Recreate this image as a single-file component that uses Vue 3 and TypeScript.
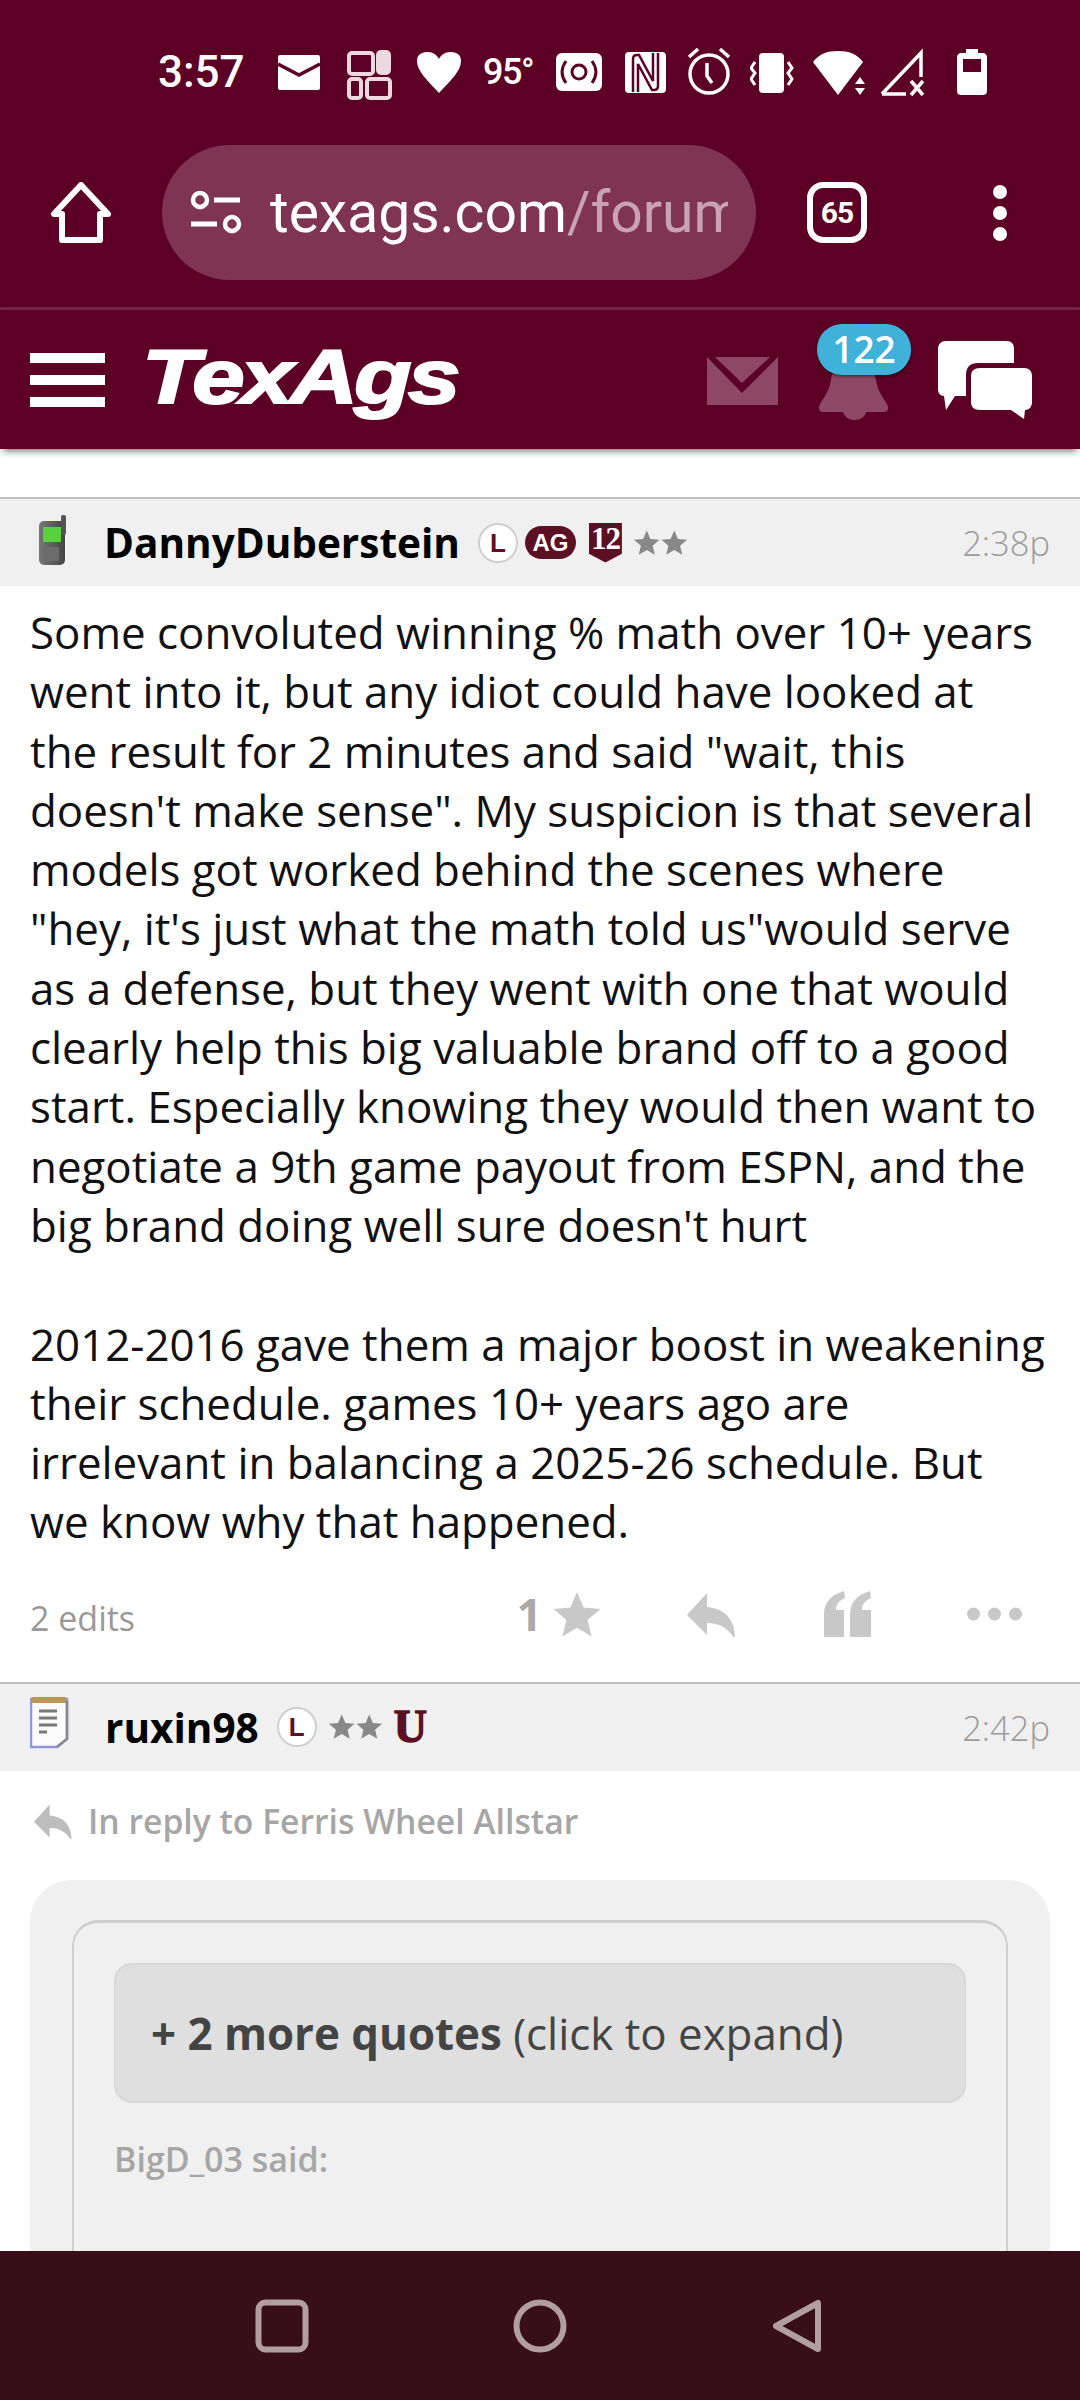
<script setup lang="ts">
const bodyTop: string[] = [
  'Some convoluted winning % math over 10+ years',
  'went into it, but any idiot could have looked at',
  'the result for 2 minutes and said "wait, this',
  'doesn\'t make sense". My suspicion is that several',
  'models got worked behind the scenes where',
  '"hey, it\'s just what the math told us"would serve',
  'as a defense, but they went with one that would',
  'clearly help this big valuable brand off to a good',
  'start. Especially knowing they would then want to',
  'negotiate a 9th game payout from ESPN, and the',
  'big brand doing well sure doesn\'t hurt',
]
const bodyBottom: string[] = [
  '2012-2016 gave them a major boost in weakening',
  'their schedule. games 10+ years ago are',
  'irrelevant in balancing a 2025-26 schedule. But',
  'we know why that happened.',
]
const starPath = 'M12 1l3.2 7.4 8 .7-6.1 5.3 1.9 7.9L12 18.1 5 22.3l1.9-7.9L.8 9.1l8-.7z'
const replyPath = 'M22 2 2 24l20 20V32c12 0 20 4 28 16 0-18-8-30-28-32z'
</script>

<template>
  <div class="phone">
    <div class="chrome">
      <div class="status">
        <span class="clock">3:57</span>
        <svg width="69" height="60" viewBox="0 0 69 60"><rect x="0" y="13" width="42" height="35" rx="2" fill="#fff" /><path d="M0 22 21 33 42 22" fill="none" stroke="#5c0025" stroke-width="3.5" /></svg>
        <svg width="70" height="60" viewBox="0 0 70 60"><g fill="none" stroke="#ecd9e0" stroke-width="4"><rect x="2" y="11" width="24" height="21" rx="3" /><rect x="2" y="37" width="12" height="19" rx="3" /><rect x="20" y="37" width="23" height="19" rx="3" /></g><rect x="29" y="8" width="15" height="25" rx="5" fill="#ecd9e0" /></svg>
        <svg width="66" height="60" viewBox="0 0 66 60"><path d="M22 51C10 38 0 29 0 19 0 12 5 10 11 10c5 0 9 3 11 7 2-4 6-7 11-7 6 0 11 2 11 9 0 10-10 19-22 32z" fill="#fff" /></svg>
        <span class="temp">95°</span>
        <svg width="69" height="60" viewBox="0 0 69 60"><rect x="0" y="11" width="46" height="38" rx="6" fill="#fff" /><g fill="none" stroke="#5c0025" stroke-width="3"><circle cx="23" cy="30" r="7" /><path d="M10 19c-5 7-5 15 0 22M36 19c5 7 5 15 0 22" /></g></svg>
        <svg width="62" height="60" viewBox="0 0 62 60"><rect x="0" y="10" width="41" height="41" rx="4" fill="#fff" /><path d="M8 50V17c0-3 2-4 4-4h2l14 26V11M33 11v33c0 3-2 4-4 4h-2L13 22v28" fill="none" stroke="#5c0025" stroke-width="2.5" /></svg>
        <svg width="63" height="60" viewBox="0 0 63 60"><g fill="none" stroke="#fff" stroke-width="3.5"><circle cx="22" cy="32" r="19" /><path d="M20 21v13l5 7M2 15l9-8M42 15l-9-8" /></g></svg>
        <svg width="63" height="60" viewBox="0 0 63 60"><rect x="9" y="11" width="25" height="40" rx="4" fill="#fff" /><g fill="none" stroke="#fff" stroke-width="3"><path d="M5 20 1 26l4 5-4 6 4 6M38 20l4 6-4 5 4 6-4 6" /></g></svg>
        <svg width="67" height="60" viewBox="0 0 67 60"><path d="M0 20C6 12 14 9 25 9s19 3 25 11L25 53z" fill="#fff" /><path d="M42 42l5-7 5 7zM42 46h10l-5 7z" fill="#fff" /></svg>
        <svg width="77" height="60" viewBox="0 0 77 60"><path d="M2 52 41 11v24" fill="none" stroke="#fff" stroke-width="3.5" /><path d="M2 52h24" fill="none" stroke="#fff" stroke-width="3.5" /><path d="M31 39l12 14M43 39 31 53" fill="none" stroke="#fff" stroke-width="3.5" /></svg>
        <svg width="30" height="60" viewBox="0 0 30 60"><path d="M9 7h12v4h5c2 0 4 2 4 4v34c0 3-2 4-4 4H4c-2 0-4-1-4-4V15c0-2 2-4 4-4h5z" fill="#fff" /><rect x="6" y="17" width="18" height="13" fill="#5c0025" /></svg>
      </div>
      <div class="toolbar">
        <svg class="home" width="62" height="62" viewBox="0 0 62 62"><path d="M31 3 4 32h8v26h38V32h8z" fill="none" stroke="#fff" stroke-width="6" stroke-linejoin="round" /></svg>
        <div class="pill">
          <svg class="tune" width="52" height="44" viewBox="0 0 52 44"><g fill="none" stroke="#fff" stroke-width="4.5"><circle cx="10" cy="9" r="7" /><circle cx="42" cy="33" r="7" /></g><path d="M24 9h26M1 33h26" stroke="#fff" stroke-width="5" /></svg>
          <div class="url"><span class="host">texags.com</span><span class="path">/forums</span></div>
        </div>
        <div class="tabs">65</div>
        <div class="dots"><i></i><i></i><i></i></div>
      </div>
    </div>

    <header class="site">
      <div class="burger"><i></i><i></i><i></i></div>
      <span class="logo">TexAgs</span>
      <div class="site-right">
        <svg class="env" width="71" height="48" viewBox="0 0 71 48"><path d="M0 0 35 36 71 0v48H0z" fill="#8d4964" /><path d="M8 0h55L35 26z" fill="#8d4964" /></svg>
        <div class="bell-wrap">
          <svg class="bell" width="71" height="68" viewBox="4 0 62 68" preserveAspectRatio="none"><path d="M35 6c14 0 18 10 20 24 2 12 8 18 10 24 1 4-1 6-4 6H46c-1 5-5 8-10 8s-9-3-10-8H9c-3 0-5-2-4-6 2-6 8-12 10-24C17 16 21 6 35 6z" fill="#8d4964" /></svg>
          <span class="badge">122</span>
        </div>
        <svg class="chat" width="94" height="78" viewBox="0 0 94 78"><path d="M8 0h60c6 0 8 3 8 8v14H40c-8 0-12 4-12 12v21H17L8 69l-2-14c-4 0-6-3-6-7V8c0-5 3-8 8-8z" fill="#fff" /><path d="M42 27h44c5 0 8 3 8 8v26c0 5-3 8-7 8l-1 9-13-9H42c-6 0-9-3-9-8V35c0-5 3-8 9-8z" fill="#fff" /></svg>
      </div>
    </header>

    <main class="feed">
      <section class="post first">
        <div class="post-head">
          <svg class="avatar phone-ico" width="46" height="52" viewBox="0 0 46 52"><defs><linearGradient id="ph" x1="0" x2="1" y1="0" y2="0"><stop offset="0" stop-color="#777" /><stop offset="1" stop-color="#444" /></linearGradient></defs><rect x="8" y="6" width="26" height="44" rx="5" fill="url(#ph)" /><rect x="30" y="0" width="5" height="20" rx="2" fill="#555" /><rect x="12" y="12" width="18" height="15" fill="#58d23c" /><rect x="14" y="32" width="14" height="14" fill="#6c6c6c" /></svg>
          <span class="name">DannyDuberstein</span>
          <span class="lbadge">L</span>
          <span class="ag">AG</span>
          <span class="shield">12</span>
          <svg class="stars" width="55" height="28" viewBox="0 0 48 24"><path :d="starPath" fill="#888" /><path :d="starPath" fill="#888" transform="translate(24 0)" /></svg>
          <span class="time">2:38p</span>
        </div>
        <div class="body">
          <div v-for="l in bodyTop" :key="l">{{ l }}</div>
          <div class="blank"></div>
          <div v-for="l in bodyBottom" :key="l">{{ l }}</div>
        </div>
        <div class="foot">
          <span class="edits">2 edits</span>
          <div class="actions">
            <span class="count">1</span>
            <svg class="a-star" width="50" height="48" viewBox="0 0 24 23"><path :d="starPath" fill="#c8c8c8" /></svg>
            <svg class="a-reply" width="50" height="46" viewBox="0 0 50 46"><path :d="replyPath" fill="#c8c8c8" /></svg>
            <svg class="a-quote" width="47" height="46" viewBox="0 0 47 46"><path d="M0 46V24C0 12 6 4 20 0l1 7c-7 3-9 7-9 12h8v27zM26 46V24c0-12 6-20 20-24l1 7c-7 3-9 7-9 12h9v27z" fill="#c8c8c8" /></svg>
            <svg class="a-more" width="57" height="14" viewBox="0 0 56 14"><circle cx="7" cy="7" r="6.5" fill="#c8c8c8" /><circle cx="28" cy="7" r="6.5" fill="#c8c8c8" /><circle cx="49" cy="7" r="6.5" fill="#c8c8c8" /></svg>
          </div>
        </div>
      </section>

      <section class="post">
        <div class="post-head">
          <svg class="avatar note-ico" width="46" height="54" viewBox="0 0 46 54"><path d="M1 4h36v40l-10 8H1z" fill="#fbfbfb" stroke="#8f95d6" stroke-width="2.5" /><path d="M37 6v38l-10 8" fill="none" stroke="#888" stroke-width="2.5" /><path d="M2 2h34v6H2z" fill="#b89a55" /><path d="M9 16h18M9 23h18M9 30h18M9 37h8" stroke="#777" stroke-width="3" /></svg>
          <span class="name">ruxin98</span>
          <span class="lbadge">L</span>
          <svg class="stars" width="55" height="28" viewBox="0 0 48 24"><path :d="starPath" fill="#888" /><path :d="starPath" fill="#888" transform="translate(24 0)" /></svg>
          <span class="ublock">U</span>
          <span class="time">2:42p</span>
        </div>
        <div class="reply-line">
          <svg width="44" height="36" viewBox="0 0 50 46"><path :d="replyPath" fill="#bdbdbd" /></svg>
          <span>In reply to Ferris Wheel Allstar</span>
        </div>
        <div class="quote-outer">
          <div class="quote-inner">
            <div class="expand"><b>+ 2 more quotes</b> (click to expand)</div>
            <div class="said">BigD_03 said:</div>
          </div>
        </div>
      </section>
    </main>

    <nav class="navbar">
      <svg width="54" height="54" viewBox="0 0 54 54"><rect x="3.5" y="3.5" width="47" height="47" rx="7" fill="none" stroke="#b19ea2" stroke-width="6" /></svg>
      <svg width="54" height="54" viewBox="0 0 54 54"><circle cx="27" cy="27" r="23.5" fill="none" stroke="#b19ea2" stroke-width="6" /></svg>
      <svg width="54" height="54" viewBox="0 0 54 54"><path d="M47 4v46L5 27z" fill="none" stroke="#b19ea2" stroke-width="6" stroke-linejoin="round" /></svg>
    </nav>
  </div>
</template>

<style>
html, body { margin: 0; background: #fff; }
</style>

<style scoped>
.phone {
  width: 1080px;
  height: 2400px;
  display: flex;
  flex-direction: column;
  overflow: hidden;
  background: #fff;
  font-family: "Open Sans", sans-serif;
}
.chrome { background: #5c0025; height: 307px; flex: none; }
.status {
  display: flex;
  align-items: center;
  height: 60px;
  padding: 42px 0 0 158px;
}
.status svg { flex: none; display: block; }
.clock {
  font: 500 44px "Roboto", sans-serif;
  color: #fff;
  width: 120px;
}
.temp {
  font: 500 36px "Roboto", sans-serif;
  letter-spacing: -1.5px;
  color: #fff;
  width: 73px;
}
.toolbar {
  display: flex;
  align-items: center;
  height: 135px;
  margin-top: 43px;
}
.home { margin-left: 50px; flex: none; }
.pill {
  margin-left: 50px;
  width: 594px;
  height: 135px;
  border-radius: 68px;
  background: #7f3551;
  display: flex;
  align-items: center;
  flex: none;
  box-sizing: border-box;
  padding: 0 28px;
}
.tune { flex: none; }
.url {
  margin-left: 28px;
  font: 400 57px "Roboto", sans-serif;
  white-space: nowrap;
  overflow: hidden;
  width: 458px;
}
.host { color: #fff; }
.path { color: #c9a3b4; }
.tabs {
  margin-left: 51px;
  width: 60px;
  height: 61px;
  box-sizing: border-box;
  border: 6px solid #fff;
  border-radius: 16px;
  color: #fff;
  font: 700 30px/49px "Roboto", sans-serif;
  letter-spacing: -1px;
  text-align: center;
  flex: none;
}
.dots {
  margin-left: 126px;
  display: flex;
  flex-direction: column;
  gap: 7px;
}
.dots i {
  display: block;
  width: 14px;
  height: 14px;
  border-radius: 50%;
  background: #fff;
}
.site {
  height: 139px;
  flex: none;
  border-top: 3px solid #74264a;
  background: #5c0025;
  display: flex;
  align-items: center;
  box-shadow: 0 5px 7px -3px rgba(0, 0, 0, 0.55);
  position: relative;
  z-index: 1;
}
.burger {
  margin-left: 30px;
  display: flex;
  flex-direction: column;
  gap: 12px;
}
.burger i { display: block; width: 75px; height: 10px; background: #fff; }
.logo {
  margin-left: 37px;
  margin-top: -5px;
  font: italic 700 76px/1 "Liberation Sans", sans-serif;
  color: #fff;
  -webkit-text-stroke: 2px #fff;
  letter-spacing: -3px;
  display: inline-block;
  transform: scaleX(1.24);
  transform-origin: left center;
}
.site-right {
  margin-left: auto;
  margin-right: 48px;
  display: flex;
  align-items: center;
}
.bell-wrap { position: relative; margin-left: 40px; margin-top: 12px; height: 68px; }
.bell { display: block; }
.badge {
  position: absolute;
  left: -1px;
  top: -28px;
  width: 94px;
  height: 51px;
  border-radius: 25px;
  background: #40b1d9;
  color: #fff;
  font: 600 37px/50px "Open Sans", sans-serif;
  text-align: center;
  box-shadow: 0 2px 3px rgba(0, 0, 0, 0.4);
}
.chat { margin-left: 49px; margin-top: 1px; }
.env { margin-top: 2px; }
.feed { flex: 1; min-height: 0; overflow: hidden; padding-top: 48px; }
.post-head {
  height: 87px;
  border-top: 2px solid #bfbfbf;
  background: #f0f0f0;
  display: flex;
  align-items: center;
  padding: 0 30px;
}
.avatar { flex: none; margin-left: 0; }
.note-ico { margin-top: -10px; margin-right: 0; }
.phone-ico { margin-top: -4px; margin-left: 1px; margin-right: -2px; filter: blur(0.7px); }
.name {
  margin-left: 29px;
  font-weight: 700;
  font-size: 40.5px;
  color: #000;
}
.lbadge {
  margin-left: 18px;
  width: 40px;
  height: 40px;
  box-sizing: border-box;
  border: 2px solid #cfcfcf;
  border-radius: 50%;
  background: #fff;
  color: #5c1027;
  font: 700 26px/36px "Liberation Sans", sans-serif;
  text-align: center;
  flex: none;
}
.ag {
  margin-left: 7px;
  width: 51px;
  height: 33px;
  border-radius: 17px;
  background: #5c1023;
  color: #fff;
  font: 700 24px/33px "Liberation Sans", sans-serif;
  text-align: center;
  flex: none;
}
.shield {
  margin-left: 13px;
  width: 33px;
  height: 40px;
  background: #5c1023;
  color: #fff;
  font: 700 31px/31px "Liberation Serif", serif;
  letter-spacing: -1px;
  text-align: center;
  clip-path: polygon(0 0, 100% 0, 100% 78%, 50% 100%, 0 78%);
  flex: none;
}
.stars { margin-left: 11px; flex: none; }
.ublock {
  margin-left: 11px;
  font: 900 46px/1 "Liberation Serif", serif;
  color: #5c1023;
  -webkit-text-stroke: 1.5px #5c1023;
}
.time {
  margin-left: auto;
  font-size: 34.5px;
  font-weight: 300;
  color: #9b9b9b;
}
.body {
  padding: 17px 30px 0;
  font-size: 43.85px;
  line-height: 59.3px;
  color: #111;
  white-space: nowrap;
}
.blank { height: 59.3px; }
.foot {
  height: 126px;
  display: flex;
  align-items: center;
  padding: 0 57px 0 30px;
  box-sizing: border-box;
  margin-top: 4px;
}
.edits { font-size: 34px; color: #999; font-weight: 400; margin-top: -2px; }
.actions { margin-left: auto; display: flex; align-items: center; margin-top: -10px; }
.count { font-size: 44px; font-weight: 700; color: #aaa; margin-right: 10px; }
.a-reply { margin-left: 83px; }
.a-quote { margin-left: 89px; }
.a-more { margin-left: 95px; }
.reply-line {
  display: flex;
  align-items: center;
  gap: 14px;
  padding: 27px 30px 0;
  font-size: 33.7px;
  font-weight: 600;
  color: #a6a6a6;
  height: 47px;
}
.quote-outer {
  margin: 35px 30px 0;
  padding: 40px 42px;
  background: #f0f0f0;
  border-radius: 42px;
}
.quote-inner {
  border: 2px solid #d0d0d0;
  border-top-width: 3px;
  border-radius: 26px;
  padding: 40px;
  height: 500px;
}
.expand {
  height: 140px;
  box-sizing: border-box;
  background: #dfdfdf;
  border: 2px solid #d8d8d8;
  border-radius: 18px;
  padding: 0 35px;
  display: flex;
  align-items: center;
  white-space: pre;
  font-size: 43.85px;
  color: #444;
}
.said {
  margin-top: 33px;
  font-size: 34px;
  font-weight: 600;
  color: #a6a6a6;
}
.navbar {
  height: 149px;
  flex: none;
  background: #380f18;
  display: flex;
  align-items: center;
  justify-content: center;
  gap: 204px;
  position: relative;
  z-index: 2;
}
</style>
